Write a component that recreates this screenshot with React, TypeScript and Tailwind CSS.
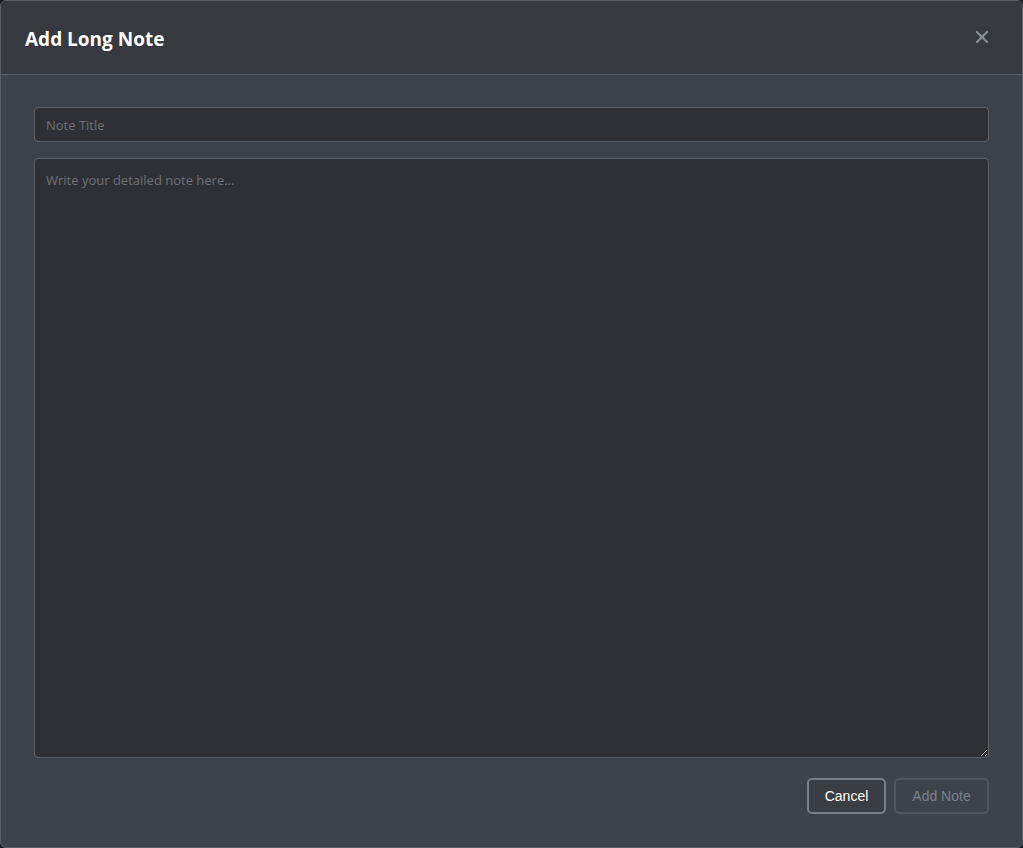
import { X } from "lucide-react";

const App = () => {
    return (
        <div className="h-[848px] w-[1023px] bg-[#1b1c1f]">
            <div className="flex h-full w-full flex-col overflow-hidden rounded-[6px] border border-[#5a5e66] bg-[#3e424a]">
                <div className="flex h-[74px] shrink-0 items-center justify-between border-b border-[#5a5e66] bg-[#363940] pt-[4px] pl-6 pr-[30px]">
                    <h2
                        className="text-[19px] font-bold text-white"
                        style={{ fontFamily: '"Open Sans", sans-serif' }}
                    >
                        Add Long Note
                    </h2>
                    <button className="-mt-[6px] text-[#8b9098]">
                        <X size={20} strokeWidth={2.6} />
                    </button>
                </div>
                <div
                    className="flex flex-1 flex-col px-[33px] pt-8 pb-8"
                    style={{ fontFamily: '"Open Sans", sans-serif' }}
                >
                    <input
                        type="text"
                        placeholder="Note Title"
                        className="h-[35px] w-full rounded-[4px] border border-[#5c6067] bg-[#2f3035] px-[11px] text-[13px] text-white outline-none placeholder:text-[#6d7179]"
                    />
                    <textarea
                        placeholder="Write your detailed note here..."
                        className="mt-4 h-[600px] w-full rounded-[4px] border border-[#5c6067] bg-[#2f3035] px-[11px] py-3 text-[13px] text-white outline-none placeholder:text-[#6d7179]"
                    />
                    <div
                        className="mt-5 flex justify-end gap-[8px]"
                        style={{ fontFamily: '"Liberation Sans", Arial, sans-serif' }}
                    >
                        <button className="h-[36px] w-[79px] rounded-[5px] border-2 border-[#7a7e86] bg-[#3a3d44] text-[14px] text-white">
                            Cancel
                        </button>
                        <button
                            disabled
                            className="h-[36px] w-[95px] rounded-[5px] border-2 border-[#51555c] text-[14px] text-[#7c8088]"
                        >
                            Add Note
                        </button>
                    </div>
                </div>
            </div>
        </div>
    );
};

export default App;
